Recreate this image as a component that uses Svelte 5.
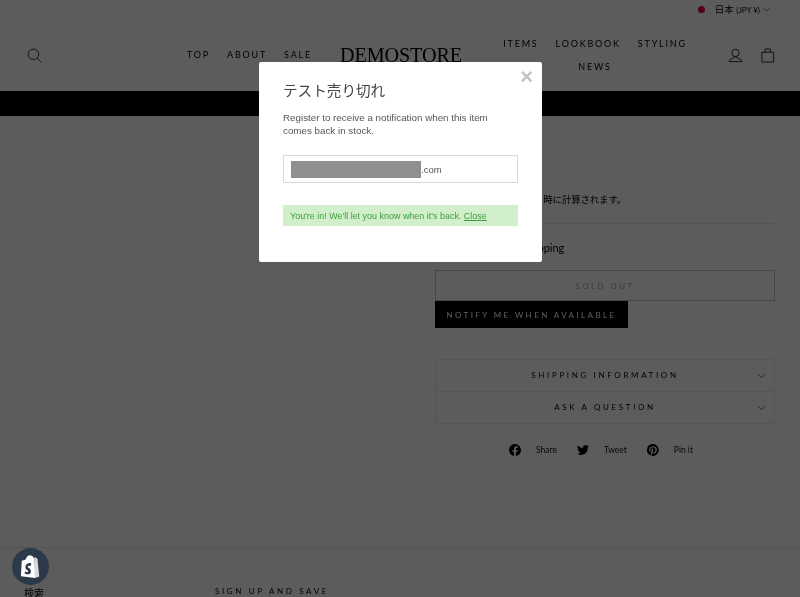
<script>
  let navLeft = ["TOP", "ABOUT", "SALE"];
  let navRight = ["ITEMS", "LOOKBOOK", "STYLING", "NEWS"];
  let accordions = ["SHIPPING INFORMATION", "ASK A QUESTION"];
</script>

<div class="page">
  <div class="topbar">
    <span class="flag"><i></i></span>
    <span class="currency">日本 <small>(JPY ¥)</small></span>
    <svg class="chev-small" viewBox="0 0 12 8"><path d="M1 1.500l5 5 5-5" /></svg>
  </div>

  <header class="site-header">
    <div class="side left">
      <svg class="icon" viewBox="0 0 16 16"><circle cx="6.800" cy="6.800" r="5.600" /><path d="M10.900 10.900l4.400 4.400" /></svg>
      <nav class="nav">
        {#each navLeft as item}<a href="/">{item}</a>{/each}
      </nav>
    </div>
    <div class="logo">DEMOSTORE</div>
    <div class="side right">
      <nav class="nav wrap">
        {#each navRight as item}<a href="/">{item}</a>{/each}
      </nav>
      <div class="tools">
        <svg class="icon" viewBox="0 0 16 16"><circle cx="8" cy="5.300" r="3.900" /><path d="M8 9.200c-1 2-6.500 1.700-7 5.300h14c-.5-3.600-6-3.300-7-5.300z" /></svg>
        <svg class="icon" viewBox="0 0 16 16"><path d="M2 4.500h12.500v10.500h-12.500zM5.500 4.500v-3.500h5.500v3.500" /></svg>
      </div>
    </div>
  </header>

  <div class="announce"></div>

  <main class="product">
    <div></div>
    <section class="info">
      <h1>テスト売り切れ</h1>
      <p class="tax">配送料はチェックアウト時に計算されます。</p>
      <hr />
      <p class="stock">In stock, ready for shipping</p>
      <button class="sold" disabled>SOLD OUT</button>
      <button class="notify">NOTIFY ME WHEN AVAILABLE</button>

      <div class="accordions">
        {#each accordions as label}
          <div class="acc">
            <span>{label}</span>
            <svg viewBox="0 0 12 8"><path d="M1 1.500l5 5 5-5" /></svg>
          </div>
        {/each}
      </div>

      <div class="share">
        <span class="share-item">
          <svg viewBox="0 0 24 24"><path class="solid" d="M24 12a12 12 0 1 0-13.900 11.900v-8.400h-3v-3.500h3V9.400c0-3 1.800-4.700 4.500-4.700 1.300 0 2.700.2 2.700.2v3h-1.500c-1.500 0-2 .9-2 1.900V12h3.400l-.5 3.500h-2.900v8.400A12 12 0 0 0 24 12z" /></svg>
          Share
        </span>
        <span class="share-item">
          <svg viewBox="0 0 24 24"><path class="solid" d="M24 4.600a9.800 9.800 0 0 1-2.800.8 4.900 4.900 0 0 0 2.200-2.700 9.800 9.800 0 0 1-3.100 1.200 4.900 4.900 0 0 0-8.400 4.500A14 14 0 0 1 1.700 3.200a4.900 4.900 0 0 0 1.500 6.600 4.900 4.900 0 0 1-2.200-.6v.1a4.900 4.900 0 0 0 3.900 4.800 4.900 4.900 0 0 1-2.200.1 4.900 4.900 0 0 0 4.600 3.400A9.900 9.900 0 0 1 0 19.600a14 14 0 0 0 7.500 2.200c9.100 0 14-7.500 14-14v-.6A10 10 0 0 0 24 4.600z" /></svg>
          Tweet
        </span>
        <span class="share-item">
          <svg viewBox="0 0 24 24"><path class="solid" fill-rule="evenodd" d="M12 0a12 12 0 0 0-4.400 23.200c-.1-.9-.2-2.400 0-3.400l1.400-6s-.4-.7-.4-1.800c0-1.700 1-2.900 2.200-2.900 1 0 1.500.8 1.500 1.700 0 1-.7 2.600-1 4-.3 1.200.6 2.200 1.800 2.200 2.100 0 3.800-2.300 3.800-5.500 0-2.900-2.100-4.900-5-4.900-3.400 0-5.400 2.600-5.400 5.200 0 1 .4 2.100.9 2.700.1.100.1.200.1.300l-.3 1.400c-.1.200-.2.300-.4.200-1.500-.7-2.400-2.900-2.400-4.700 0-3.800 2.800-7.300 8-7.300 4.200 0 7.400 3 7.400 7 0 4.200-2.600 7.500-6.300 7.500-1.200 0-2.400-.6-2.800-1.400l-.8 2.900c-.3 1.100-1 2.400-1.500 3.200A12 12 0 1 0 12 0z" /></svg>
          Pin it
        </span>
      </div>
    </section>
  </main>

  <footer class="site-footer">
    <div class="shop-col">
      <span class="search-label">検索</span>
    </div>
    <div class="signup">SIGN UP AND SAVE</div>
  </footer>
</div>

<div class="overlay">
  <div class="modal">
    <button class="close" aria-label="Close">×</button>
    <h2>テスト売り切れ</h2>
    <p>Register to receive a notification when this item comes back in stock.</p>
    <div class="email">
      <span class="mask"></span><span>.com</span>
    </div>
    <div class="success">You're in! We'll let you know when it's back. <a href="/">Close</a></div>
  </div>
</div>

<!-- shop badge sits above the overlay -->
<span class="shop-badge">
  <svg viewBox="0 0 24 28">
    <path class="bag" d="M2 7.500L6.500 6c.7-2.700 2.500-5 4.800-5 .8 0 1.300.3 1.700.8 1.300 0 2 .9 2.400 2.200l1.100-.3 1 23.300L1 25z" />
    <path class="bag-side" d="M16.800 3.600l1.400.2 1.800 1.500 2 20-5 1.700z" />
    <path class="s" d="M12.800 11.300l-.7 2.100s-.9-.4-1.800-.4c-1.500.1-1.500 1-1.500 1.300.1 1.300 3.500 1.600 3.700 4.700.2 2.400-1.300 3.800-3.400 3.900-2.500.2-3.800-1.300-3.800-1.300l.5-2.100s1.400 1.100 2.500 1c.7 0 1-.6 1-1.100-.1-1.700-2.900-1.600-3.100-4.400-.2-2.400 1.400-4.700 4.800-5 1.300 0 1.400 0 1.400 0z" />
  </svg>
</span>

<style>
  :global(body) {
    margin: 0;
    background: #fff;
    overflow: hidden;
  }

  .page {
    width: 800px;
    height: 597px;
    overflow: hidden;
    font-family: Lato, "Noto Sans CJK JP", sans-serif;
    color: #000;
    will-change: transform;
  }

  /* Top bar */
  .topbar {
    height: 20px;
    display: flex;
    align-items: center;
    justify-content: flex-end;
    padding: 0 30px 2px 0;
    box-sizing: border-box;
    font-size: 9.500px;
  }

  .flag {
    width: 12px;
    height: 12px;
    border-radius: 50%;
    background: #fff;
    display: flex;
    align-items: center;
    justify-content: center;
    margin-right: 7px;
  }

  .flag i {
    width: 7px;
    height: 7px;
    border-radius: 50%;
    background: #e8003f;
  }

  .currency small {
    font-size: 8px;
  }

  .chev-small {
    width: 7px;
    height: 5px;
    margin-left: 3px;
  }

  svg path,
  svg circle {
    fill: none;
    stroke: #111;
    stroke-width: 0.900;
  }

  /* Header */
  .site-header {
    height: 71px;
    display: flex;
    align-items: center;
    padding: 0 25px 0 27px;
  }

  .side {
    flex: 1;
    display: flex;
    align-items: center;
    min-width: 0;
  }

  .left {
    justify-content: space-between;
    padding-right: 28px;
    margin-top: -1px;
  }

  .right {
    justify-content: space-between;
    padding-left: 28px;
  }

  .icon {
    width: 15px;
    height: 15px;
    flex: none;
  }

  .nav {
    display: flex;
    gap: 17px;
    font-size: 9px;
    letter-spacing: 0.2em;
  }

  .nav.wrap {
    width: 200px;
    flex-wrap: wrap;
    justify-content: center;
    row-gap: 11px;
    margin: -1px 0 0 5px;
  }

  .nav a {
    color: #000;
    text-decoration: none;
    line-height: 12px;
  }

  .logo {
    font-family: "Liberation Serif", serif;
    font-size: 20.200px;
    letter-spacing: -0.1px;
    line-height: 1;
    margin-top: -1px;
  }

  .tools {
    display: flex;
    gap: 17px;
  }

  .announce {
    height: 25px;
    background: #000;
  }

  /* Product */
  .product {
    height: 431px;
    display: grid;
    grid-template-columns: 435px 340px;
  }

  .info {
    display: flex;
    flex-direction: column;
    min-width: 0;
  }

  .info h1 {
    margin: 26px 0 0;
    font-size: 14px;
    font-weight: 400;
    line-height: 20px;
  }

  .tax {
    margin: 30px 0 0 6px;
    font-size: 9.500px;
    line-height: 16px;
    letter-spacing: -0.2px;
  }

  hr {
    width: 100%;
    margin: 15px 0 0;
    border: none;
    border-top: 1px solid #e8e8e8;
  }

  .stock {
    margin: 17px 0 0;
    font-size: 11px;
    line-height: 14px;
  }

  button {
    font-family: inherit;
    border-radius: 0;
    cursor: pointer;
  }

  .sold {
    height: 31px;
    margin-top: 15px;
    border: 1px solid #c8c8c8;
    background: #fff;
    color: #aaa;
    font-size: 8px;
    letter-spacing: 0.3em;
  }

  .notify {
    width: 193px;
    height: 27px;
    padding: 0;
    border: none;
    background: #000;
    color: #fff;
    font-size: 8px;
    letter-spacing: 0.3em;
  }

  .accordions {
    margin-top: 31px;
    border: 1px solid #efefef;
  }

  .acc {
    position: relative;
    height: 31px;
    padding-bottom: 2px;
    box-sizing: border-box;
    display: flex;
    align-items: center;
    justify-content: center;
    font-size: 8px;
    letter-spacing: 0.33em;
  }

  .acc + .acc {
    border-top: 1px solid #efefef;
    height: 32px;
  }

  .acc svg {
    position: absolute;
    right: 8px;
    top: 13px;
    width: 9px;
    height: 6px;
  }

  .share {
    margin-top: 20px;
    padding-right: 8px;
    display: flex;
    justify-content: center;
    gap: 20px;
    font-size: 8.500px;
    color: #111;
  }

  .share-item {
    display: flex;
    align-items: center;
    gap: 15px;
  }

  .share-item svg {
    width: 12px;
    height: 12px;
  }

  .share-item .solid {
    fill: #000;
    stroke: none;
  }

  /* Footer */
  .site-footer {
    height: 50px;
    border-top: 1px solid #e8e8e8;
    display: flex;
  }

  .shop-col {
    width: 215px;
    padding: 38px 0 0 24px;
    box-sizing: border-box;
  }

  .search-label {
    display: block;
    font-size: 10px;
    line-height: 14px;
  }

  .signup {
    margin-top: 37px;
    font-size: 8px;
    line-height: 12px;
    letter-spacing: 0.33em;
  }

  /* Modal */
  .overlay {
    position: fixed;
    inset: 0;
    background: rgba(0, 0, 0, 0.64);
    will-change: transform;
  }

  .modal {
    position: absolute;
    left: 259px;
    top: 62px;
    width: 283px;
    height: 200px;
    box-sizing: border-box;
    padding: 18px 24px 0;
    background: #fff;
    border-radius: 2px;
    font-family: "Liberation Sans", "Noto Sans CJK JP", sans-serif;
    color: #555;
  }

  .modal h2 {
    margin: 0;
    font-size: 14.600px;
    font-weight: 400;
    line-height: 22px;
    color: #444;
  }

  .modal p {
    margin: 9px 0 0;
    font-size: 9.800px;
    line-height: 13px;
  }

  .close {
    position: absolute;
    right: 9px;
    top: 3px;
    padding: 0;
    border: none;
    background: none;
    color: #c4c4c4;
    font-family: "Liberation Sans", sans-serif;
    font-size: 22px;
    font-weight: 700;
    line-height: 24px;
  }

  .email {
    height: 28px;
    margin-top: 18px;
    padding-left: 7px;
    box-sizing: border-box;
    border: 1px solid #d9d9d9;
    display: flex;
    align-items: center;
    font-size: 9.500px;
    color: #555;
  }

  .mask {
    width: 130px;
    height: 17px;
    background: #8f8f8f;
  }

  .success {
    height: 21px;
    margin-top: 22px;
    padding-left: 7px;
    display: flex;
    align-items: center;
    background: #d2efcb;
    color: #3f9d3f;
    font-size: 8.960px;
    white-space: pre;
  }

  .success a {
    color: #3f9d3f;
  }

  .shop-badge {
    position: fixed;
    left: 12px;
    top: 548px;
    width: 37px;
    height: 37px;
    border-radius: 50%;
    background: #2b3948;
    display: flex;
    align-items: center;
    justify-content: center;
  }

  .shop-badge svg {
    width: 21px;
    height: 25px;
  }

  .shop-badge .bag {
    fill: #fff;
    stroke: none;
  }

  .shop-badge .bag-side {
    fill: #d9dadb;
    stroke: none;
  }

  .shop-badge .s {
    fill: #2b3948;
    stroke: none;
  }
</style>
